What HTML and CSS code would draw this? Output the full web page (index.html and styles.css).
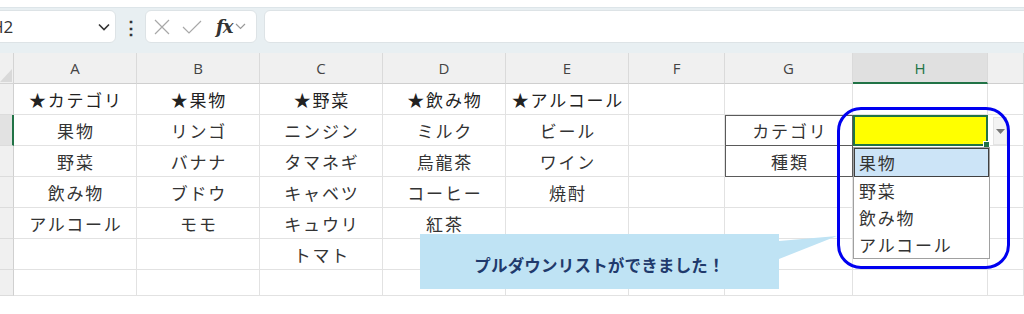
FILE: index.html
```html
<!DOCTYPE html>
<html lang="ja">
<head>
<meta charset="utf-8">
<link rel="stylesheet" href="styles.css">
</head>
<body>
<div class="page">
  <div class="topbar">
    <div class="namebox">
      <span class="name">H2</span>
      <svg class="chev" width="12" height="8" viewBox="0 0 12 8"><path d="M1 1.5 L6 6.5 L11 1.5" fill="none" stroke="#333" stroke-width="1.6"/></svg>
    </div>
    <div class="dots">⋮</div>
    <div class="fbtns">
      <svg width="16" height="16" viewBox="0 0 16 16"><path d="M1 1 L15 15 M15 1 L1 15" stroke="#a8a8a8" stroke-width="1.2" fill="none"/></svg>
      <svg width="20" height="16" viewBox="0 0 20 16"><path d="M1 8 L7 14 L19 2" stroke="#a8a8a8" stroke-width="1.2" fill="none"/></svg>
      <span class="fx">fx</span>
      <svg width="11" height="7" viewBox="0 0 11 7"><path d="M1 1 L5.5 5.5 L10 1" fill="none" stroke="#999" stroke-width="1.2"/></svg>
    </div>
    <div class="finput"></div>
  </div>

  <div class="sheet">
    <div class="corner"><svg width="13" height="31" viewBox="0 0 13 31"><polygon points="12,16 12,29 0,29" fill="#d9d9d9"/></svg></div>
    <div class="ch">A</div><div class="ch">B</div><div class="ch">C</div><div class="ch">D</div><div class="ch">E</div><div class="ch">F</div><div class="ch">G</div><div class="ch ch-active">H</div><div class="ch"></div>

    <div class="rh"></div>
    <div class="c star">★カテゴリ</div><div class="c star">★果物</div><div class="c star">★野菜</div><div class="c star">★飲み物</div><div class="c star">★アルコール</div><div class="c"></div><div class="c"></div><div class="c"></div><div class="c"></div>

    <div class="rh rh-active"></div>
    <div class="c">果物</div><div class="c">リンゴ</div><div class="c">ニンジン</div><div class="c">ミルク</div><div class="c">ビール</div><div class="c"></div><div class="c box-top">カテゴリ</div>
    <div class="c sel">
      <div class="fill"></div>
      <div class="ddbtn"><svg width="9" height="5" viewBox="0 0 9 5"><polygon points="0,0 9,0 4.5,5" fill="#777"/></svg></div>
      <div class="ddlist">
        <div class="dditem hi">果物</div>
        <div class="dditem">野菜</div>
        <div class="dditem">飲み物</div>
        <div class="dditem">アルコール</div>
      </div>
    </div>
    <div class="c"></div>

    <div class="rh"></div>
    <div class="c">野菜</div><div class="c">バナナ</div><div class="c">タマネギ</div><div class="c">烏龍茶</div><div class="c">ワイン</div><div class="c"></div><div class="c box-bot">種類</div><div class="c"></div><div class="c"></div>

    <div class="rh"></div>
    <div class="c">飲み物</div><div class="c">ブドウ</div><div class="c">キャベツ</div><div class="c">コーヒー</div><div class="c">焼酎</div><div class="c"></div><div class="c"></div><div class="c"></div><div class="c"></div>

    <div class="rh"></div>
    <div class="c">アルコール</div><div class="c">モモ</div><div class="c">キュウリ</div><div class="c">紅茶</div><div class="c"></div><div class="c"></div><div class="c"></div><div class="c"></div><div class="c"></div>

    <div class="rh"></div>
    <div class="c"></div><div class="c"></div><div class="c">トマト</div><div class="c"></div><div class="c"></div><div class="c"></div><div class="c"></div><div class="c"></div><div class="c"></div>

    <div class="rh"></div>
    <div class="c"></div><div class="c"></div><div class="c"></div><div class="c"></div><div class="c"></div><div class="c"></div><div class="c"></div><div class="c"></div><div class="c"></div>
  </div>

  <div class="callout">
    <svg class="tail" width="60" height="26" viewBox="0 0 60 26"><polygon points="0,6 58,1 0,24" fill="#bfe3f4"/></svg>
    <span>プルダウンリストができました！</span>
  </div>
  <div class="ring"></div>
</div>
</body>
</html>
```

FILE: styles.css
```css
* { box-sizing: border-box; }
html, body { margin: 0; padding: 0; background: #fff; }
body { width: 1024px; height: 314px; overflow: hidden; font-family: "Noto Sans CJK JP", "Noto Sans", sans-serif; }
.page { position: relative; width: 1024px; height: 314px; padding-top: 7px; }

.topbar {
  height: 46px;
  background: #e8eff2;
  border-top: 1px solid #dde5e9;
  padding-top: 2px;
  display: flex;
  align-items: flex-start;
  overflow: hidden;
}
.namebox {
  margin-left: -12px;
  width: 128px;
  height: 33px;
  background: #fff;
  border: 1px solid #dde3e6;
  border-radius: 6px;
  display: flex;
  align-items: center;
  padding-left: 2px;
  padding-right: 5px;
}
.name { font-family: "Open Sans", "Noto Sans", sans-serif; font-size: 17px; color: #333; flex: 1; }
.chev { display: block; }
.dots { width: 29px; text-align: center; font-size: 18px; color: #333; line-height: 33px; font-weight: bold; }
.fbtns {
  width: 112px;
  height: 33px;
  background: #fff;
  border: 1px solid #dde3e6;
  border-radius: 6px;
  display: flex;
  align-items: center;
  gap: 12px;
  padding-left: 8px;
}
.fbtns svg { display: block; }
.fx { font-family: "DejaVu Serif", "Liberation Serif", serif; font-style: italic; font-weight: bold; font-size: 18px; color: #333; margin-left: 2px; margin-right: -9px; letter-spacing: -1px; }
.finput {
  margin-left: 7px;
  flex: 1;
  height: 33px;
  background: #fff;
  border: 1px solid #dde3e6;
  border-radius: 6px 0 0 6px;
  margin-right: -10px;
}

.sheet {
  display: grid;
  grid-template-columns: 14px 123px 123px 123px 123px 123px 96px 128px 135px 1fr;
  grid-template-rows: 31px repeat(6, 31px) 26px;
}
.corner { background: #f0f0f0; border-right: 1px solid #d4d4d4; border-bottom: 1px solid #d4d4d4; }
.corner svg { display: block; }
.ch {
  background: #f0f0f0;
  border-right: 1px solid #dadada;
  border-bottom: 1px solid #cfcfcf;
  font-family: "Open Sans", "Noto Sans", sans-serif;
  font-size: 15px;
  color: #444;
  display: flex;
  align-items: center;
  justify-content: center;
}
.ch-active { background: #e0e0e0; color: #217346; border-bottom: 2px solid #217346; }
.rh { background: #f0f0f0; border-right: 1px solid #d0d0d0; border-bottom: 1px solid #dcdcdc; }
.rh-active { background: #e2e2e2; border-right: 2px solid #217346; }
.c {
  border-right: 1px solid #e2e2e2;
  border-bottom: 1px solid #e2e2e2;
  font-size: 17px;
  letter-spacing: 1.8px;
  padding-left: 1.8px;
  color: #333;
  display: flex;
  align-items: center;
  justify-content: center;
  white-space: nowrap;
}
.star { color: #222; }
.box-top { border: 1px solid #5a5a5a; }
.box-bot { border-left: 1px solid #5a5a5a; border-right: 1px solid #5a5a5a; border-bottom: 1px solid #5a5a5a; }

.sel { position: relative; border: none; }
.fill {
  position: absolute;
  left: 0; top: 0; right: 0; bottom: 0;
  background: #ffff00;
  border: 2px solid #217346;
}
.fill::after {
  content: "";
  position: absolute;
  right: -4px; bottom: -4px;
  width: 5px; height: 5px;
  background: #217346;
  border: 1px solid #fff;
}
.ddbtn {
  position: absolute;
  left: calc(100% + 5px);
  top: 2px;
  width: 14px;
  height: 28px;
  background: #f3f3f3;
  border: 1px solid #e4e4e4;
  display: flex;
  align-items: center;
  justify-content: center;
  z-index: 2;
}
.ddbtn svg { display: block; }
.ddlist {
  position: absolute;
  left: 0;
  top: calc(100% + 1px);
  width: 137px;
  background: #fff;
  border: 1px solid #a0a0a0;
  z-index: 3;
}
.dditem {
  height: 27px;
  display: flex;
  align-items: center;
  padding-left: 5px;
  font-size: 17px;
  letter-spacing: 1.8px;
  color: #333;
}
.dditem.hi { background: #cce4f7; border: 1px solid #404040; padding-left: 4px; height: 29px; }

.callout {
  position: absolute;
  left: 420px;
  top: 234px;
  width: 359px;
  height: 55px;
  background: #bfe3f4;
  display: flex;
  align-items: center;
  justify-content: center;
  padding-top: 6px;
  font-size: 16.5px;
  font-weight: 700;
  color: #1f3a6c;
  letter-spacing: 0.2px;
  z-index: 4;
}
.tail { position: absolute; left: 359px; top: 1px; display: block; }
.ring {
  position: absolute;
  left: 837px;
  top: 107px;
  width: 173px;
  height: 162px;
  border: 3.5px solid #0000f0;
  border-radius: 24px;
  z-index: 5;
}
```
